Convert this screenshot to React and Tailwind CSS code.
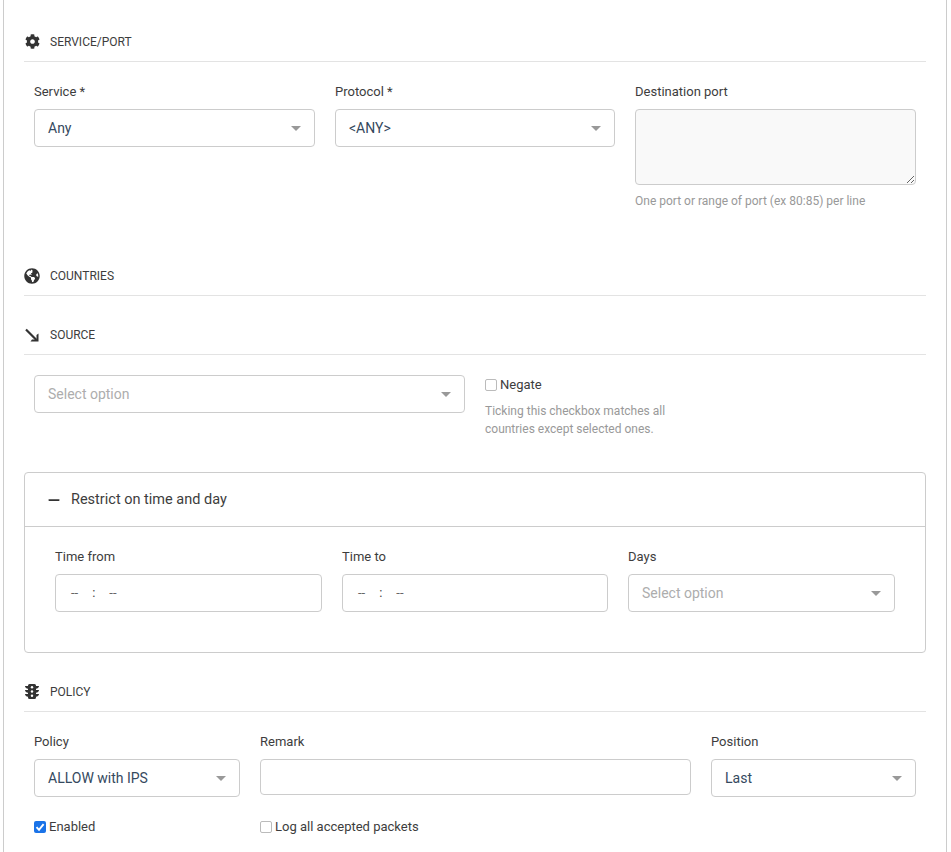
import React from "react";
import { FaCog, FaGlobeAmericas } from "react-icons/fa";
import { FaMinus } from "react-icons/fa6";

function Header({ icon, title, className = "" }) {
  return (
    <div className={`flex h-[38px] items-center border-b border-[#e3e3e3] pb-[2px] ${className}`}>
      <span className="flex w-[16px] justify-center text-[#333333]">{icon}</span>
      <span className="ml-[10px] text-[12px] uppercase text-[#3d3d3d]">{title}</span>
    </div>
  );
}

function Label({ children }) {
  return <div className="mb-[8px] h-[20px] text-[13px] leading-[22px] text-[#3d3d3d]">{children}</div>;
}

function Select({ value, placeholder, className = "" }) {
  return (
    <div className={`flex h-[38px] items-center justify-between rounded-[4px] border border-[#cccccc] bg-white pl-[13px] pr-[13px] text-[14px] ${className}`}>
      <span className={value ? "text-[#35495e]" : "text-[#adadad]"}>{value || placeholder}</span>
      <span className="h-0 w-0 border-x-[5px] border-t-[5px] border-x-transparent border-t-[#999999]" />
    </div>
  );
}

function TimeInput() {
  return (
    <div className="flex h-[38px] items-center rounded-[4px] border border-[#cccccc] bg-white pl-[15px] text-[13px] text-[#666666]">
      <span>--</span>
      <span className="ml-[14px] text-[#444444]">:</span>
      <span className="ml-[14px]">--</span>
    </div>
  );
}

function Check({ checked, label, className = "" }) {
  return (
    <label className={`flex items-center text-[13px] leading-[20px] text-[#3d3d3d] ${className}`}>
      {checked ? (
        <span className="flex h-[12px] w-[12px] items-center justify-center rounded-[2px] bg-[#1a73e8]">
          <svg viewBox="0 0 12 12" className="h-[12px] w-[12px]">
            <path d="M2.5 6.2 5 8.8 9.6 3.2" fill="none" stroke="white" strokeWidth="1.9" />
          </svg>
        </span>
      ) : (
        <span className="h-[12px] w-[12px] rounded-[2px] border border-[#bbbbbb] bg-white" />
      )}
      <span className="ml-[3px]">{label}</span>
    </label>
  );
}

export default function App() {
  return (
    <div className="h-[852px] overflow-hidden bg-white" style={{ fontFamily: "Roboto, sans-serif" }}>
      <div className="ml-[3px] h-full w-[944px] border-x border-[#cccccc] px-[20px] pt-[24px]">
        <Header icon={<FaCog size={15} />} title="Service/Port" />

        <div className="mt-[19px] grid grid-cols-[281px_280px_281px] gap-x-[20px] px-[10px]">
          <div>
            <Label>Service *</Label>
            <Select value="Any" />
          </div>
          <div>
            <Label>Protocol *</Label>
            <Select value="<ANY>" />
          </div>
          <div>
            <Label>Destination port</Label>
            <textarea
              disabled
              className="block h-[76px] w-full rounded-[4px] border border-[#cccccc] bg-[#f9f9f9]"
            />
            <div className="mt-[7px] text-[12px] leading-[18px] text-[#999999]">
              One port or range of port (ex 80:85) per line
            </div>
          </div>
        </div>

        <Header className="mt-[48px]" icon={<FaGlobeAmericas size={16} />} title="Countries" />
        <Header
          className="mt-[21px]"
          icon={
            <svg viewBox="0 0 16 16" className="h-[16px] w-[16px]">
              <path d="M2 2.5 12.5 13" fill="none" stroke="currentColor" strokeWidth="2.2" />
              <path d="M14.5 6.5v8h-8l1.5-2h4.5V8z" fill="currentColor" />
            </svg>
          }
          title="Source"
        />

        <div className="mt-[20px] flex px-[10px]">
          <div className="w-[431px]">
            <Select placeholder="Select option" />
          </div>
          <div className="ml-[20px]">
            <Check label="Negate" />
            <div className="mt-[7px] w-[200px] text-[12px] leading-[18px] text-[#999999]">
              Ticking this checkbox matches all countries except selected ones.
            </div>
          </div>
        </div>

        <div className="mt-[34px] h-[181px] rounded-[4px] border border-[#cccccc]">
          <div className="flex h-[54px] items-center border-b border-[#cccccc] pl-[22px]">
            <FaMinus size={14} className="text-[#333333]" />
            <span className="ml-[10px] text-[14.5px] text-[#3d3d3d]">Restrict on time and day</span>
          </div>
          <div className="mt-[19px] grid grid-cols-[267px_266px_267px] gap-x-[20px] px-[30px]">
            <div>
              <Label>Time from</Label>
              <TimeInput />
            </div>
            <div>
              <Label>Time to</Label>
              <TimeInput />
            </div>
            <div>
              <Label>Days</Label>
              <Select placeholder="Select option" />
            </div>
          </div>
        </div>

        <Header
          className="mt-[21px]"
          icon={
            <svg viewBox="0 0 14 15" className="h-[15px] w-[14px]">
              <path
                d="M3 1.5A1.5 1.5 0 0 1 4.5 0h5A1.5 1.5 0 0 1 11 1.5V2h3c0 1.4-1.2 2.5-3 2.7V6h3c0 1.4-1.2 2.5-3 2.7V10h3c0 1.4-1.2 2.5-3 2.7v.8A1.5 1.5 0 0 1 9.5 15h-5A1.5 1.5 0 0 1 3 13.5v-.8C1.2 12.5 0 11.4 0 10h3V8.7C1.2 8.5 0 7.4 0 6h3V4.7C1.2 4.5 0 3.4 0 2h3z"
                fill="currentColor"
              />
              <circle cx="7" cy="3.2" r="1.2" fill="white" />
              <circle cx="7" cy="7.5" r="1.2" fill="white" />
              <circle cx="7" cy="11.8" r="1.2" fill="white" />
            </svg>
          }
          title="Policy"
        />

        <div className="mt-[19px] grid grid-cols-[206px_431px_205px] gap-x-[20px] px-[10px]">
          <div>
            <Label>Policy</Label>
            <Select value="ALLOW with IPS" />
            <Check checked label="Enabled" className="mt-[20px]" />
          </div>
          <div>
            <Label>Remark</Label>
            <input className="block h-[36px] w-full rounded-[4px] border border-[#cccccc] bg-white" />
            <Check label="Log all accepted packets" className="mt-[22px]" />
          </div>
          <div>
            <Label>Position</Label>
            <Select value="Last" />
          </div>
        </div>
      </div>
    </div>
  );
}
